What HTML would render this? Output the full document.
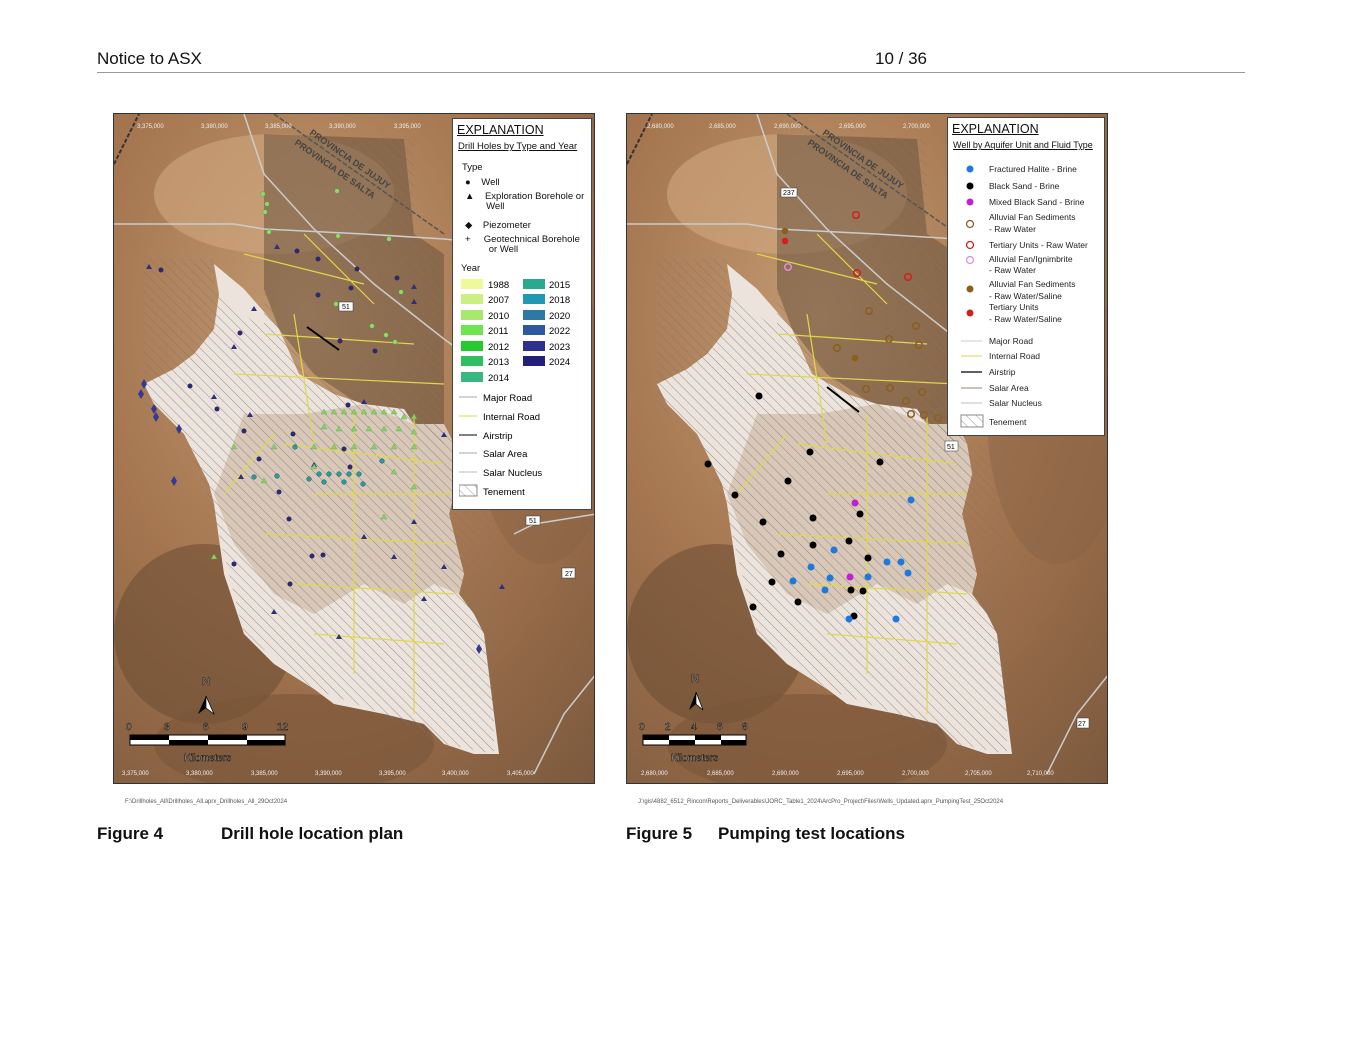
<!DOCTYPE html>
<html><head><meta charset="utf-8">
<style>
body{margin:0;background:#fff;font-family:"Liberation Sans",sans-serif;}
.page{position:relative;width:1365px;height:1055px;overflow:hidden;}
.hdr{position:absolute;top:49px;font-size:17px;color:#111;}
.rule{position:absolute;left:97px;top:72px;width:1148px;height:1px;background:#999;}
.map{position:absolute;top:113px;width:482px;height:671px;border:1px solid #333;box-sizing:border-box;overflow:hidden;}
.path{position:absolute;top:799px;font-size:6px;color:#555;}
.cap{position:absolute;top:824px;font-size:17px;font-weight:bold;color:#111;}
.leg{position:absolute;background:#fff;border:1px solid #444;font-size:10px;color:#111;}
.leg .t{font-size:12.5px;text-decoration:underline;margin:4px 0 0 4px;}
.leg .s{font-size:9.5px;text-decoration:underline;margin:4px 0 4px 5px;}
.row{position:absolute;left:0;font-size:9.5px;line-height:10px;}
</style></head><body><div class="page">
<div class="hdr" style="left:97px">Notice to ASX</div>
<div class="hdr" style="left:875px">10 / 36</div>
<div class="rule"></div>

<!-- MAP 1 -->
<div class="map" style="left:113px">
<svg width="482" height="671" viewBox="0 0 482 671">
<defs>
<radialGradient id="bg" cx="0.4" cy="0.3" r="0.9"><stop offset="0" stop-color="#c29a72"/><stop offset="0.5" stop-color="#a57650"/><stop offset="1" stop-color="#7d5a3e"/></radialGradient>
<pattern id="h" width="7" height="7" patternUnits="userSpaceOnUse" patternTransform="rotate(-45)"><line x1="0" y1="0" x2="0" y2="7" stroke="#777" stroke-width="0.8"/></pattern>
</defs>
<rect width="482" height="671" fill="url(#bg)"/>
<ellipse cx="90" cy="520" rx="90" ry="90" fill="#6e4f36" opacity="0.6"/>
<ellipse cx="180" cy="630" rx="140" ry="50" fill="#7a5538" opacity="0.6"/>
<ellipse cx="430" cy="300" rx="70" ry="150" fill="#8a6446" opacity="0.5"/>
<ellipse cx="160" cy="80" rx="120" ry="60" fill="#d0a880" opacity="0.6"/>
<polygon points="150,20 290,25 300,120 330,140 330,330 290,300 245,290 200,260 165,215 150,175" fill="#5d4634" opacity="0.45"/>
<polygon points="100,150 130,175 165,215 185,260 220,280 250,290 290,295 300,310 330,310 340,330 345,360 335,400 340,420 350,460 345,480 360,500 370,520 375,560 380,600 385,640 360,640 330,630 310,610 270,600 220,590 200,575 160,550 130,520 110,460 100,390 95,370 70,320 40,290 30,270 60,255 80,240 100,215 105,180" fill="#ece4dc"/>
<polygon points="130,300 190,300 250,290 300,310 330,310 340,330 345,360 335,400 340,420 350,460 345,480 320,470 290,490 250,470 200,500 160,480 120,430 100,380" fill="#d9c8b8"/>
<polygon points="30,145 100,145 100,175 160,225 200,265 260,290 330,300 340,330 380,330 380,640 330,630 270,600 200,575 130,520 100,400 70,320 30,290" fill="url(#h)"/>
<polygon points="150,25 300,25 300,130 330,140 330,330 290,300 200,265 150,210" fill="url(#h)"/>
<polyline points="0,110 120,110 150,115 250,120 330,125 380,130" stroke="#ccc" stroke-width="1.5" fill="none"/>
<polyline points="130,0 150,60 200,115 260,170 330,225 420,290" stroke="#ccc" stroke-width="1.5" fill="none"/>
<polyline points="400,420 420,410 482,400" stroke="#ccc" stroke-width="1.5" fill="none"/>
<polyline points="420,660 450,600 482,560" stroke="#ccc" stroke-width="1.5" fill="none"/>
<path d="M150,220 L300,230 M120,260 L330,270 M180,200 L200,330 M170,330 L330,350 M240,300 L240,560 M200,380 L340,380 M150,420 L340,430 M180,470 L340,480 M300,300 L300,600 M200,520 L330,530 M130,140 L250,170 M190,120 L260,190 M160,320 L110,380" stroke="#e0d84a" stroke-width="1.2" fill="none"/>
<line x1="193" y1="213" x2="225" y2="236" stroke="#000" stroke-width="2"/>
<line x1="0" y1="50" x2="25" y2="0" stroke="#333" stroke-width="2" stroke-dasharray="4,2"/>
<line x1="160" y1="0" x2="330" y2="120" stroke="#555" stroke-width="1.5" stroke-dasharray="5,2"/>
<text x="195" y="20" font-size="9" font-weight="bold" fill="#444" transform="rotate(35 195 20)">PROVINCIA DE JUJUY</text>
<text x="180" y="30" font-size="9" font-weight="bold" fill="#444" transform="rotate(35 180 30)">PROVINCIA DE SALTA</text>
<g fill="#2b2a6e">
<circle cx="183" cy="137" r="2.5"/><circle cx="204" cy="145" r="2.5"/><circle cx="243" cy="155" r="2.5"/><circle cx="283" cy="164" r="2.5"/><circle cx="237" cy="174" r="2.5"/><circle cx="204" cy="181" r="2.5"/><circle cx="126" cy="219" r="2.5"/><circle cx="226" cy="227" r="2.5"/><circle cx="261" cy="237" r="2.5"/><circle cx="76" cy="272" r="2.5"/><circle cx="103" cy="295" r="2.5"/><circle cx="130" cy="317" r="2.5"/><circle cx="179" cy="320" r="2.5"/><circle cx="234" cy="291" r="2.5"/><circle cx="230" cy="335" r="2.5"/><circle cx="145" cy="345" r="2.5"/><circle cx="165" cy="378" r="2.5"/><circle cx="198" cy="442" r="2.5"/><circle cx="236" cy="353" r="2.5"/><circle cx="175" cy="405" r="2.5"/><circle cx="120" cy="450" r="2.5"/><circle cx="47" cy="156" r="2.5"/><circle cx="352" cy="326" r="2.5"/><circle cx="176" cy="470" r="2.5"/><circle cx="209" cy="441" r="2.5"/></g>
<g fill="#2f2f80">
<path d="M163,130l3,5h-6z"/><path d="M140,192l3,5h-6z"/><path d="M300,185l3,5h-6z"/><path d="M35,150l3,5h-6z"/><path d="M100,280l3,5h-6z"/><path d="M136,298l3,5h-6z"/><path d="M200,348l3,5h-6z"/><path d="M250,420l3,5h-6z"/><path d="M300,405l3,5h-6z"/><path d="M280,440l3,5h-6z"/><path d="M330,450l3,5h-6z"/><path d="M160,495l3,5h-6z"/><path d="M310,482l3,5h-6z"/><path d="M300,170l3,5h-6z"/><path d="M330,318l3,5h-6z"/><path d="M388,470l3,5h-6z"/><path d="M250,285l3,5h-6z"/><path d="M127,360l3,5h-6z"/><path d="M120,230l3,5h-6z"/><path d="M225,520l3,5h-6z"/></g>
<g fill="#9cd65a" stroke="#3a7" stroke-width="0.5">
<circle cx="149" cy="80" r="2.3"/><circle cx="153" cy="90" r="2.3"/><circle cx="151" cy="98" r="2.3"/><circle cx="155" cy="118" r="2.3"/><circle cx="223" cy="77" r="2.3"/><circle cx="224" cy="122" r="2.3"/><circle cx="275" cy="125" r="2.3"/><circle cx="287" cy="178" r="2.3"/><circle cx="258" cy="212" r="2.3"/><circle cx="272" cy="221" r="2.3"/><circle cx="281" cy="228" r="2.3"/><circle cx="222" cy="190" r="2.3"/>
</g>
<g fill="#8fd04c" stroke="#4a8" stroke-width="0.4">
<path d="M210,295l3,5h-6z"/><path d="M220,295l3,5h-6z"/><path d="M230,295l3,5h-6z"/><path d="M240,295l3,5h-6z"/><path d="M250,295l3,5h-6z"/><path d="M260,295l3,5h-6z"/><path d="M270,295l3,5h-6z"/><path d="M280,295l3,5h-6z"/><path d="M290,300l3,5h-6z"/><path d="M300,300l3,5h-6z"/>
<path d="M210,310l3,5h-6z"/><path d="M225,312l3,5h-6z"/><path d="M240,312l3,5h-6z"/><path d="M255,312l3,5h-6z"/><path d="M270,312l3,5h-6z"/><path d="M285,312l3,5h-6z"/><path d="M300,315l3,5h-6z"/>
<path d="M200,330l3,5h-6z"/><path d="M220,330l3,5h-6z"/><path d="M240,330l3,5h-6z"/><path d="M260,330l3,5h-6z"/><path d="M280,330l3,5h-6z"/><path d="M300,330l3,5h-6z"/>
<path d="M120,330l3,5h-6z"/><path d="M160,330l3,5h-6z"/><path d="M200,350l3,5h-6z"/><path d="M280,355l3,5h-6z"/><path d="M300,370l3,5h-6z"/><path d="M150,364l3,5h-6z"/><path d="M100,440l3,5h-6z"/><path d="M270,400l3,5h-6z"/>
</g>
<g fill="#2a9ca0" stroke="#155" stroke-width="0.5">
<circle cx="205" cy="360" r="2.3"/><circle cx="215" cy="360" r="2.3"/><circle cx="225" cy="360" r="2.3"/><circle cx="235" cy="360" r="2.3"/><circle cx="245" cy="360" r="2.3"/><circle cx="195" cy="365" r="2.3"/><circle cx="210" cy="368" r="2.3"/><circle cx="230" cy="368" r="2.3"/><circle cx="249" cy="370" r="2.3"/><circle cx="140" cy="363" r="2.3"/><circle cx="268" cy="347" r="2.3"/><circle cx="181" cy="333" r="2.3"/><circle cx="163" cy="362" r="2.3"/>
</g>
<g fill="#333a90"><path d="M30,265l3,5-3,5-3-5z"/><path d="M27,275l3,5-3,5-3-5z"/><path d="M40,290l3,5-3,5-3-5z"/><path d="M42,298l3,5-3,5-3-5z"/><path d="M65,310l3,5-3,5-3-5z"/><path d="M60,362l3,5-3,5-3-5z"/><path d="M365,530l3,5-3,5-3-5z"/></g>
<g fill="#fff" stroke="#333" stroke-width="0.5"><rect x="225" y="188" width="14" height="9"/><rect x="412" y="402" width="14" height="9"/><rect x="448" y="454" width="13" height="10"/></g>
<text x="228" y="195" font-size="7">51</text><text x="415" y="409" font-size="7">51</text><text x="451" y="462" font-size="7">27</text>
<path d="M92,582 l-8,18 8,-6z" fill="#000"/><path d="M92,582 l8,18 -8,-6z" fill="#fff" stroke="#000" stroke-width="0.7"/>
<text x="88" y="571" font-size="11" fill="#fff" stroke="#000" stroke-width="0.5">N</text>
<rect x="16" y="621" width="155" height="10" fill="#fff" stroke="#000"/>
<rect x="16" y="621" width="39" height="5" fill="#000"/><rect x="94" y="621" width="39" height="5" fill="#000"/>
<rect x="55" y="626" width="39" height="5" fill="#000"/><rect x="133" y="626" width="38" height="5" fill="#000"/>
<g font-size="10" fill="#fff" stroke="#000" stroke-width="0.5"><text x="12" y="616">0</text><text x="50" y="616">3</text><text x="89" y="616">6</text><text x="128" y="616">9</text><text x="163" y="616">12</text><text x="70" y="647">Kilometers</text></g>
<g font-size="6" fill="#eee"><text x="8" y="661">3,375,000</text><text x="72" y="661">3,380,000</text><text x="137" y="661">3,385,000</text><text x="201" y="661">3,390,000</text><text x="265" y="661">3,395,000</text><text x="328" y="661">3,400,000</text><text x="393" y="661">3,405,000</text>
<text x="23" y="14">3,375,000</text><text x="87" y="14">3,380,000</text><text x="151" y="14">3,385,000</text><text x="215" y="14">3,390,000</text><text x="280" y="14">3,395,000</text></g>
</svg>
<div class="leg" style="left:338px;top:4px;width:138px;height:390px;">
<div class="t">EXPLANATION</div><div class="s">Drill Holes by Type and Year</div>
<div class="row" style="top:44px;left:9px">Type</div>
<div class="row" style="top:59px;left:12px">●&nbsp;&nbsp;&nbsp;&nbsp;Well</div>
<div class="row" style="top:73px;left:12px">▲&nbsp;&nbsp;&nbsp;&nbsp;Exploration Borehole or<br>&nbsp;&nbsp;&nbsp;&nbsp;&nbsp;&nbsp;&nbsp;&nbsp;Well</div>
<div class="row" style="top:102px;left:12px">◆&nbsp;&nbsp;&nbsp;&nbsp;Piezometer</div>
<div class="row" style="top:116px;left:12px">+&nbsp;&nbsp;&nbsp;&nbsp;&nbsp;Geotechnical Borehole<br>&nbsp;&nbsp;&nbsp;&nbsp;&nbsp;&nbsp;&nbsp;&nbsp;&nbsp;or Well</div>
<div class="row" style="top:145px;left:8px">Year</div>
<svg style="position:absolute;left:8px;top:160px" width="120" height="110"><g font-size="9.5" font-family="Liberation Sans">
<rect x="0" y="0" width="22" height="10" fill="#f0f99a"/><text x="27" y="9">1988</text>
<rect x="0" y="15" width="22" height="10" fill="#ccef84"/><text x="27" y="24">2007</text>
<rect x="0" y="31" width="22" height="10" fill="#a8e870"/><text x="27" y="40">2010</text>
<rect x="0" y="46" width="22" height="10" fill="#6ee44e"/><text x="27" y="55">2011</text>
<rect x="0" y="62" width="22" height="10" fill="#23cc2c"/><text x="27" y="71">2012</text>
<rect x="0" y="77" width="22" height="10" fill="#2fbf60"/><text x="27" y="86">2013</text>
<rect x="0" y="93" width="22" height="10" fill="#38b880"/><text x="27" y="102">2014</text>
<rect x="62" y="0" width="22" height="10" fill="#2aa890"/><text x="88" y="9">2015</text>
<rect x="62" y="15" width="22" height="10" fill="#1e98b4"/><text x="88" y="24">2018</text>
<rect x="62" y="31" width="22" height="10" fill="#2e78a8"/><text x="88" y="40">2020</text>
<rect x="62" y="46" width="22" height="10" fill="#2e58a0"/><text x="88" y="55">2022</text>
<rect x="62" y="62" width="22" height="10" fill="#2e3090"/><text x="88" y="71">2023</text>
<rect x="62" y="77" width="22" height="10" fill="#22207a"/><text x="88" y="86">2024</text></g></svg>
<svg style="position:absolute;left:6px;top:272px" width="130" height="112"><g font-size="9.5" font-family="Liberation Sans">
<line x1="0" y1="6" x2="18" y2="6" stroke="#aaa"/><text x="24" y="10">Major Road</text>
<line x1="0" y1="25" x2="18" y2="25" stroke="#d8d840"/><text x="24" y="29">Internal Road</text>
<line x1="0" y1="44" x2="18" y2="44" stroke="#000"/><text x="24" y="48">Airstrip</text>
<line x1="0" y1="62" x2="18" y2="62" stroke="#aaa"/><text x="24" y="66">Salar Area</text>
<line x1="0" y1="81" x2="18" y2="81" stroke="#bbb"/><text x="24" y="85">Salar Nucleus</text>
<rect x="0" y="94" width="18" height="11" fill="url(#h)" stroke="#888"/><text x="24" y="104">Tenement</text></g></svg>
</div>
</div>
<div class="path" style="left:125px">F:\Drillholes_All\Drillholes_All.aprx_Drillholes_All_29Oct2024</div>
<div class="cap" style="left:97px">Figure 4</div><div class="cap" style="left:221px">Drill hole location plan</div>

<!-- MAP 2 -->
<div class="map" style="left:626px">
<svg width="482" height="671" viewBox="0 0 482 671">
<defs>
<radialGradient id="bg2" cx="0.4" cy="0.3" r="0.9"><stop offset="0" stop-color="#c29a72"/><stop offset="0.5" stop-color="#a57650"/><stop offset="1" stop-color="#7d5a3e"/></radialGradient>
<pattern id="h2" width="7" height="7" patternUnits="userSpaceOnUse" patternTransform="rotate(-45)"><line x1="0" y1="0" x2="0" y2="7" stroke="#777" stroke-width="0.8"/></pattern>
</defs>
<rect width="482" height="671" fill="url(#bg2)"/>
<ellipse cx="90" cy="520" rx="90" ry="90" fill="#6e4f36" opacity="0.6"/>
<ellipse cx="180" cy="630" rx="140" ry="50" fill="#7a5538" opacity="0.6"/>
<ellipse cx="430" cy="300" rx="70" ry="150" fill="#8a6446" opacity="0.5"/>
<ellipse cx="160" cy="80" rx="120" ry="60" fill="#d0a880" opacity="0.6"/>
<polygon points="150,20 290,25 300,120 330,140 330,330 290,300 245,290 200,260 165,215 150,175" fill="#5d4634" opacity="0.45"/>
<polygon points="100,150 130,175 165,215 185,260 220,280 250,290 290,295 300,310 330,310 340,330 345,360 335,400 340,420 350,460 345,480 360,500 370,520 375,560 380,600 385,640 360,640 330,630 310,610 270,600 220,590 200,575 160,550 130,520 110,460 100,390 95,370 70,320 40,290 30,270 60,255 80,240 100,215 105,180" fill="#ece4dc"/>
<polygon points="130,300 190,300 250,290 300,310 330,310 340,330 345,360 335,400 340,420 350,460 345,480 320,470 290,490 250,470 200,500 160,480 120,430 100,380" fill="#d9c8b8"/>
<polygon points="30,145 100,145 100,175 160,225 200,265 260,290 330,300 340,330 380,330 380,640 330,630 270,600 200,575 130,520 100,400 70,320 30,290" fill="url(#h2)"/>
<polygon points="150,25 300,25 300,130 330,140 330,330 290,300 200,265 150,210" fill="url(#h2)"/>
<polyline points="0,110 120,110 150,115 250,120 330,125 380,130" stroke="#ccc" stroke-width="1.5" fill="none"/>
<polyline points="130,0 150,60 200,115 260,170 330,225 420,290" stroke="#ccc" stroke-width="1.5" fill="none"/>
<polyline points="420,660 450,600 482,560" stroke="#ccc" stroke-width="1.5" fill="none"/>
<path d="M150,220 L300,230 M120,260 L330,270 M180,200 L200,330 M170,330 L330,350 M240,300 L240,560 M200,380 L340,380 M150,420 L340,430 M180,470 L340,480 M300,300 L300,600 M200,520 L330,530 M130,140 L250,170 M190,120 L260,190 M160,320 L110,380" stroke="#e0d84a" stroke-width="1.2" fill="none"/>
<line x1="200" y1="273" x2="232" y2="298" stroke="#000" stroke-width="2"/>
<line x1="0" y1="50" x2="25" y2="0" stroke="#333" stroke-width="2" stroke-dasharray="4,2"/>
<line x1="160" y1="0" x2="330" y2="120" stroke="#555" stroke-width="1.5" stroke-dasharray="5,2"/>
<text x="195" y="20" font-size="9" font-weight="bold" fill="#444" transform="rotate(35 195 20)">PROVINCIA DE JUJUY</text>
<text x="180" y="30" font-size="9" font-weight="bold" fill="#444" transform="rotate(35 180 30)">PROVINCIA DE SALTA</text>
<g fill="#000"><circle cx="132" cy="282" r="3.5"/><circle cx="183" cy="338" r="3.5"/><circle cx="81" cy="350" r="3.5"/><circle cx="253" cy="348" r="3.5"/><circle cx="161" cy="367" r="3.5"/><circle cx="108" cy="381" r="3.5"/><circle cx="136" cy="408" r="3.5"/><circle cx="186" cy="404" r="3.5"/><circle cx="233" cy="400" r="3.5"/><circle cx="154" cy="440" r="3.5"/><circle cx="186" cy="431" r="3.5"/><circle cx="222" cy="427" r="3.5"/><circle cx="241" cy="444" r="3.5"/><circle cx="145" cy="468" r="3.5"/><circle cx="224" cy="476" r="3.5"/><circle cx="171" cy="488" r="3.5"/><circle cx="126" cy="493" r="3.5"/><circle cx="236" cy="477" r="3.5"/><circle cx="227" cy="502" r="3.5"/></g>
<g fill="#1e78e0"><circle cx="284" cy="386" r="3.5"/><circle cx="207" cy="436" r="3.5"/><circle cx="184" cy="453" r="3.5"/><circle cx="166" cy="467" r="3.5"/><circle cx="203" cy="464" r="3.5"/><circle cx="198" cy="476" r="3.5"/><circle cx="241" cy="463" r="3.5"/><circle cx="260" cy="448" r="3.5"/><circle cx="274" cy="448" r="3.5"/><circle cx="281" cy="459" r="3.5"/><circle cx="222" cy="505" r="3.5"/><circle cx="269" cy="505" r="3.5"/></g>
<g fill="#c020d0"><circle cx="228" cy="389" r="3.5"/><circle cx="223" cy="463" r="3.5"/></g>
<g fill="none" stroke="#8a6020" stroke-width="1.5"><circle cx="242" cy="197" r="3.3"/><circle cx="289" cy="212" r="3.3"/><circle cx="210" cy="234" r="3.3"/><circle cx="262" cy="225" r="3.3"/><circle cx="292" cy="231" r="3.3"/><circle cx="239" cy="275" r="3.3"/><circle cx="263" cy="274" r="3.3"/><circle cx="295" cy="278" r="3.3"/><circle cx="284" cy="300" r="3.3"/><circle cx="297" cy="301" r="3.3"/><circle cx="311" cy="304" r="3.3"/><circle cx="279" cy="287" r="3.3"/></g>
<g fill="none" stroke="#d02020" stroke-width="1.5"><circle cx="229" cy="101" r="3.3"/><circle cx="230" cy="159" r="3.3"/><circle cx="281" cy="163" r="3.3"/></g>
<circle cx="161" cy="153" r="3.3" fill="none" stroke="#e090d0" stroke-width="1.5"/>
<circle cx="158" cy="117" r="3.3" fill="#8a6020"/><circle cx="158" cy="127" r="3.3" fill="#d02020"/><circle cx="228" cy="244" r="3.3" fill="#8a6020"/>
<g fill="#fff" stroke="#333" stroke-width="0.5"><rect x="154" y="74" width="16" height="9"/><rect x="318" y="327" width="13" height="10"/><rect x="450" y="604" width="12" height="10"/></g>
<text x="156" y="81" font-size="7">237</text><text x="320" y="335" font-size="7">51</text><text x="451" y="612" font-size="7">27</text>
<path d="M69,578 l-7,18 7,-6z" fill="#000"/><path d="M69,578 l7,18 -7,-6z" fill="#fff" stroke="#000" stroke-width="0.7"/>
<text x="64" y="568" font-size="11" fill="#fff" stroke="#000" stroke-width="0.5">N</text>
<rect x="16" y="621" width="103" height="10" fill="#fff" stroke="#000"/>
<rect x="16" y="621" width="26" height="5" fill="#000"/><rect x="68" y="621" width="26" height="5" fill="#000"/>
<rect x="42" y="626" width="26" height="5" fill="#000"/><rect x="94" y="626" width="25" height="5" fill="#000"/>
<g font-size="10" fill="#fff" stroke="#000" stroke-width="0.5"><text x="12" y="616">0</text><text x="38" y="616">2</text><text x="64" y="616">4</text><text x="90" y="616">6</text><text x="115" y="616">8</text><text x="44" y="647">Kilometers</text></g>
<g font-size="6" fill="#eee"><text x="14" y="661">2,680,000</text><text x="80" y="661">2,685,000</text><text x="145" y="661">2,690,000</text><text x="210" y="661">2,695,000</text><text x="275" y="661">2,700,000</text><text x="338" y="661">2,705,000</text><text x="400" y="661">2,710,000</text>
<text x="20" y="14">2,680,000</text><text x="82" y="14">2,685,000</text><text x="147" y="14">2,690,000</text><text x="212" y="14">2,695,000</text><text x="276" y="14">2,700,000</text></g>
</svg>
<div class="leg" style="left:320px;top:3px;width:156px;height:317px;">
<div class="t">EXPLANATION</div><div class="s" style="font-size:9px">Well by Aquifer Unit and Fluid Type</div>
<svg style="position:absolute;left:0;top:42px" width="156" height="272"><g font-size="8.5" font-family="Liberation Sans" fill="#222">
<circle cx="22" cy="9" r="3.5" fill="#1e78e0"/><text x="41" y="12">Fractured Halite - Brine</text>
<circle cx="22" cy="26" r="3.5" fill="#000"/><text x="41" y="29">Black Sand - Brine</text>
<circle cx="22" cy="42" r="3.5" fill="#c020d0"/><text x="41" y="45">Mixed Black Sand - Brine</text>
<circle cx="22" cy="64" r="3.5" fill="none" stroke="#8a6020" stroke-width="1.3"/><text x="41" y="60">Alluvial Fan Sediments</text><text x="41" y="72">- Raw Water</text>
<circle cx="22" cy="85" r="3.5" fill="none" stroke="#d02020" stroke-width="1.3"/><text x="41" y="88">Tertiary Units - Raw Water</text>
<circle cx="22" cy="100" r="3.5" fill="none" stroke="#e090d0" stroke-width="1.3"/><text x="41" y="102">Alluvial Fan/Ignimbrite</text><text x="41" y="113">- Raw Water</text>
<circle cx="22" cy="129" r="3.5" fill="#8a6020"/><text x="41" y="127">Alluvial Fan Sediments</text><text x="41" y="139">- Raw Water/Saline</text>
<circle cx="22" cy="153" r="3.5" fill="#d02020"/><text x="41" y="150">Tertiary Units</text><text x="41" y="162">- Raw Water/Saline</text>
<line x1="13" y1="181" x2="34" y2="181" stroke="#ccc"/><text x="41" y="184">Major Road</text>
<line x1="13" y1="196" x2="34" y2="196" stroke="#d8d840"/><text x="41" y="199">Internal Road</text>
<line x1="13" y1="212" x2="34" y2="212" stroke="#000" stroke-width="1.3"/><text x="41" y="215">Airstrip</text>
<line x1="13" y1="228" x2="34" y2="228" stroke="#a08070"/><text x="41" y="231">Salar Area</text>
<line x1="13" y1="243" x2="34" y2="243" stroke="#bbb"/><text x="41" y="246">Salar Nucleus</text>
<rect x="13" y="255" width="22" height="12" fill="url(#h2)" stroke="#888"/><text x="41" y="265">Tenement</text></g></svg>
</div>
</div>
<div class="path" style="left:638px">J:\gis\4882_6512_Rincon\Reports_Deliverables\JORC_Table1_2024\ArcPro_Project\Files\Wells_Updated.aprx_PumpingTest_25Oct2024</div>
<div class="cap" style="left:626px">Figure 5</div><div class="cap" style="left:718px">Pumping test locations</div>
</div></body></html>
